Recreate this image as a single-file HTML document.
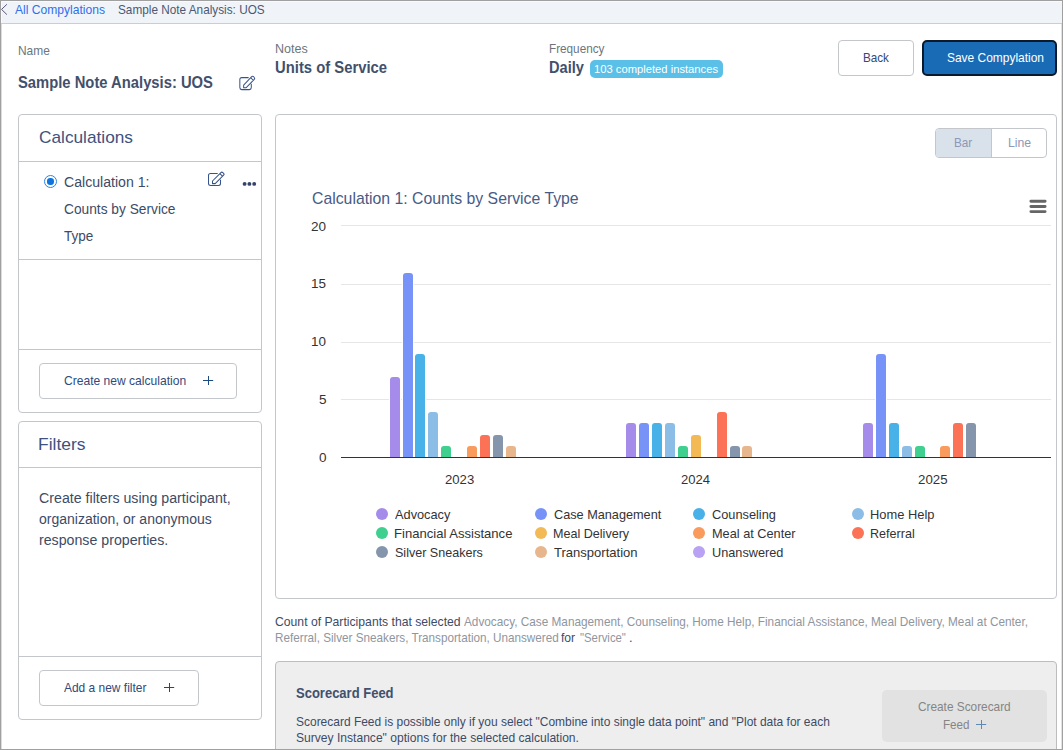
<!DOCTYPE html>
<html>
<head>
<meta charset="utf-8">
<title>Sample Note Analysis: UOS</title>
<style>
*{box-sizing:border-box;margin:0;padding:0}
html,body{width:1063px;height:750px;overflow:hidden;background:#fff}
body{font-family:"Liberation Sans",sans-serif;color:#3d4b66;position:relative}
.abs{position:absolute}
.t{position:absolute;white-space:nowrap;line-height:1;transform-origin:0 0}
#frame{position:absolute;left:0;top:0;width:1063px;height:750px;border:1px solid #a0a0a0;z-index:50;pointer-events:none}
#crumb{position:absolute;left:1px;top:1px;width:1061px;height:23px;background:#f0f4f8;border-bottom:1px solid #c9ced4;box-shadow:inset 1px 1px 0 #f8fafc}
#edgeL{position:absolute;left:1px;top:24px;width:1px;height:725px;background:#dcdcdc}
#edgeR{position:absolute;left:1061px;top:24px;width:1px;height:725px;background:#e2e2e2}
.panel{position:absolute;border:1px solid #c3c7cc;border-radius:4px;background:#fff}
.hr{position:absolute;height:1px;background:#c3c7cc}
.btn{position:absolute;border:1px solid #c3c7cc;border-radius:4px;background:#fff}
.bar{position:absolute;width:10px;border-radius:3px 3px 0 0;box-shadow:0 0 0 1px #fff}
.grid{position:absolute;left:341px;width:710px;height:1px;background:#e6e6e6}
.dot{position:absolute;width:12px;height:12px;border-radius:50%}
</style>
</head>
<body>
<div id="crumb"></div><div id="edgeL"></div><div id="edgeR"></div>
<svg class="abs" style="left:0px;top:3px" width="9" height="13" viewBox="0 0 9 13"><path d="M6.9 1.3 L1.55 6.4 L6.9 11.6" fill="none" stroke="#4a4565" stroke-width="0.9"/></svg>

<div class="abs" id="badge" style="left:590px;top:60px;width:133px;height:18px;border-radius:5px;background:#5bc0e8"></div>
<div class="btn" style="left:838px;top:40px;width:76px;height:36px"></div>
<div class="abs" style="left:922px;top:40px;width:135px;height:36px;border:2px solid #0b1a2a;border-radius:5px;background:#1a6bb5"></div>

<!-- Calculations panel -->
<div class="panel" style="left:18px;top:114px;width:244px;height:299px"></div>
<div class="hr" style="left:19px;top:161px;width:242px"></div>
<div class="hr" style="left:19px;top:259px;width:242px"></div>
<div class="hr" style="left:19px;top:349px;width:242px"></div>
<div class="abs" style="left:44px;top:175px;width:13px;height:13px;border-radius:50%;border:1px solid #2a84e4;background:#fff"></div>
<div class="abs" style="left:46.7px;top:177.7px;width:7.6px;height:7.6px;border-radius:42%;background:#0d74de"></div>
<div class="btn" style="left:39px;top:363px;width:198px;height:36px"></div>

<!-- Filters panel -->
<div class="panel" style="left:18px;top:421px;width:244px;height:299px"></div>
<div class="hr" style="left:19px;top:467px;width:242px"></div>
<div class="hr" style="left:19px;top:656px;width:242px"></div>
<div class="btn" style="left:39px;top:670px;width:160px;height:36px"></div>

<!-- Chart panel -->
<div class="panel" style="left:275px;top:114px;width:782px;height:485px"></div>
<div class="abs" style="left:935px;top:128px;width:112px;height:30px;border:1px solid #c3c7cc;border-radius:4px;background:#fff"></div>
<div class="abs" style="left:936px;top:129px;width:55px;height:28px;border-radius:3px 0 0 3px;background:#d9e2ea"></div>
<div class="abs" style="left:991px;top:129px;width:1px;height:28px;background:#c3c7cc"></div>
<svg class="abs" style="left:1028px;top:198px" width="20" height="18" viewBox="0 0 20 18"><path d="M2.9 3.3 H17.1 M2.9 8.5 H17.1 M2.9 13.6 H17.1" stroke="#666" stroke-width="2.9" stroke-linecap="round" fill="none"/></svg>
<div class="grid" style="top:225px"></div>
<div class="grid" style="top:284px"></div>
<div class="grid" style="top:342px"></div>
<div class="grid" style="top:399px"></div>
<div class="bar" style="left:390px;top:377.0px;height:80.0px;background:#a58cea"></div>
<div class="bar" style="left:403px;top:273.0px;height:184.0px;background:#7793f8"></div>
<div class="bar" style="left:415px;top:354.0px;height:103.0px;background:#47b1e8"></div>
<div class="bar" style="left:428px;top:412.0px;height:45.0px;background:#8cbde6"></div>
<div class="bar" style="left:441px;top:446.0px;height:11.0px;background:#3fcf8e"></div>
<div class="bar" style="left:467px;top:446.0px;height:11.0px;background:#f89b5c"></div>
<div class="bar" style="left:480px;top:435.0px;height:22.0px;background:#fb7256"></div>
<div class="bar" style="left:493px;top:435.0px;height:22.0px;background:#8595ab"></div>
<div class="bar" style="left:506px;top:446.0px;height:11.0px;background:#e8b68d"></div>
<div class="bar" style="left:626px;top:423.0px;height:34.0px;background:#a58cea"></div>
<div class="bar" style="left:639px;top:423.0px;height:34.0px;background:#7793f8"></div>
<div class="bar" style="left:652px;top:423.0px;height:34.0px;background:#47b1e8"></div>
<div class="bar" style="left:665px;top:423.0px;height:34.0px;background:#8cbde6"></div>
<div class="bar" style="left:678px;top:446.0px;height:11.0px;background:#3fcf8e"></div>
<div class="bar" style="left:691px;top:435.0px;height:22.0px;background:#f2b955"></div>
<div class="bar" style="left:717px;top:412.0px;height:45.0px;background:#fb7256"></div>
<div class="bar" style="left:730px;top:446.0px;height:11.0px;background:#8595ab"></div>
<div class="bar" style="left:742px;top:446.0px;height:11.0px;background:#e8b68d"></div>
<div class="bar" style="left:863px;top:423.0px;height:34.0px;background:#a58cea"></div>
<div class="bar" style="left:876px;top:354.0px;height:103.0px;background:#7793f8"></div>
<div class="bar" style="left:889px;top:423.0px;height:34.0px;background:#47b1e8"></div>
<div class="bar" style="left:902px;top:446.0px;height:11.0px;background:#8cbde6"></div>
<div class="bar" style="left:915px;top:446.0px;height:11.0px;background:#3fcf8e"></div>
<div class="bar" style="left:940px;top:446.0px;height:11.0px;background:#f89b5c"></div>
<div class="bar" style="left:953px;top:423.0px;height:34.0px;background:#fb7256"></div>
<div class="bar" style="left:966px;top:423.0px;height:34.0px;background:#8595ab"></div>
<div class="abs" style="left:341px;top:457px;width:710px;height:1px;background:#333"></div>
<div class="dot" style="left:376px;top:508px;background:#a58cea"></div>
<div class="dot" style="left:534.6px;top:508px;background:#7793f8"></div>
<div class="dot" style="left:693px;top:508px;background:#47b1e8"></div>
<div class="dot" style="left:851.7px;top:508px;background:#8cbde6"></div>
<div class="dot" style="left:376px;top:527px;background:#3fcf8e"></div>
<div class="dot" style="left:534.6px;top:527px;background:#f2b955"></div>
<div class="dot" style="left:693px;top:527px;background:#f89b5c"></div>
<div class="dot" style="left:851.7px;top:527px;background:#fb7256"></div>
<div class="dot" style="left:376px;top:546px;background:#8595ab"></div>
<div class="dot" style="left:534.6px;top:546px;background:#e8b68d"></div>
<div class="dot" style="left:693px;top:546px;background:#b9a1f3"></div>

<!-- scorecard -->
<div class="abs" style="left:275px;top:661px;width:782px;height:100px;border:1px solid #bdbdbd;border-radius:4px;background:#eeeeee"></div>
<div class="abs" style="left:882px;top:690px;width:165px;height:52px;border-radius:5px;background:#e2e2e2"></div>

<svg class="abs" style="left:239px;top:75px" width="18" height="16" viewBox="0 0 18 16"><path transform="translate(0.35 0.1) scale(0.955 1)" d="M9.7 2.5 H2.5 Q0.5 2.5 0.5 4.5 V12.5 Q0.5 14.5 2.5 14.5 H10.5 Q12.5 14.5 12.5 12.5 V8.7 M4.5 10 L12.9 1.6 Q13.9 0.7 14.8 1.6 L15.6 2.4 Q16.5 3.3 15.6 4.2 L7.2 12.6 H4.5 Z M11.9 2.6 L14.7 5.4" fill="none" stroke="#36538a" stroke-width="1.05" stroke-linejoin="round"/></svg>
<svg class="abs" style="left:208px;top:171px" width="18" height="16" viewBox="0 0 18 16"><path transform="translate(0 0)" d="M9.7 2.5 H2.5 Q0.5 2.5 0.5 4.5 V12.5 Q0.5 14.5 2.5 14.5 H10.5 Q12.5 14.5 12.5 12.5 V8.7 M4.5 10 L12.9 1.6 Q13.9 0.7 14.8 1.6 L15.6 2.4 Q16.5 3.3 15.6 4.2 L7.2 12.6 H4.5 Z M11.9 2.6 L14.7 5.4" fill="none" stroke="#36538a" stroke-width="1.05" stroke-linejoin="round"/></svg>
<svg class="abs" style="left:242px;top:181px" width="16" height="6" viewBox="0 0 16 6"><circle cx="2.6" cy="2.9" r="1.95" fill="#33436a"/><circle cx="7.4" cy="2.9" r="1.95" fill="#33436a"/><circle cx="12.2" cy="2.9" r="1.95" fill="#33436a"/></svg>
<svg class="abs" style="left:202.7px;top:375px" width="11" height="11" viewBox="0 0 11 11"><path d="M0 5.5 H10.2 M5.5 1 V10" stroke="#1f4a80" stroke-width="1" fill="none"/></svg>
<svg class="abs" style="left:164.4px;top:682px" width="11" height="11" viewBox="0 0 11 11"><path d="M0 5.5 H10.2 M5.5 1 V10" stroke="#1f4a80" stroke-width="1" fill="none"/></svg>
<svg class="abs" style="left:976.4px;top:719.2px" width="11" height="11" viewBox="0 0 11 11"><path d="M0 5.5 H10.2 M5.5 1 V10" stroke="#5a8ab8" stroke-width="1" fill="none"/></svg>
<div class="t" id="bc1" style="left:14.75px;top:4px;font-size:12.25px;color:#2f6fed;transform:scaleX(0.9871)">All Compylations</div>
<div class="t" id="bc2" style="left:117.5px;top:4px;font-size:12.25px;color:#4a5875;transform:scaleX(0.9619)">Sample Note Analysis: UOS</div>
<div class="t" id="h_name" style="left:17.75px;top:45px;font-size:12.25px;color:#6c757d;transform:scaleX(0.9742)">Name</div>
<div class="t" id="h_title" style="left:17.5px;top:74px;font-size:16.5px;font-weight:bold;color:#42506c;transform:scaleX(0.8959)">Sample Note Analysis: UOS</div>
<div class="t" id="h_notes" style="left:274.5px;top:43px;font-size:12.25px;color:#6c757d;transform:scaleX(1.0235)">Notes</div>
<div class="t" id="h_units" style="left:275px;top:59px;font-size:16.5px;font-weight:bold;color:#42506c;transform:scaleX(0.8986)">Units of Service</div>
<div class="t" id="h_freq" style="left:549px;top:43px;font-size:12.25px;color:#6c757d;transform:scaleX(0.9578)">Frequency</div>
<div class="t" id="h_daily" style="left:548.75px;top:59px;font-size:16.5px;font-weight:bold;color:#42506c;transform:scaleX(0.8859)">Daily</div>
<div class="t" id="badge_t" style="left:594px;top:64px;font-size:11px;color:#ffffff;transform:scaleX(1.0193)">103 completed instances</div>
<div class="t" id="b_back" style="left:862.5px;top:51px;font-size:13px;color:#2f4a7d;transform:scaleX(0.8980)">Back</div>
<div class="t" id="b_save" style="left:946.5px;top:51px;font-size:13px;color:#ffffff;transform:scaleX(0.9191)">Save Compylation</div>
<div class="t" id="p_calc" style="left:39px;top:129px;font-size:17px;color:#3e5280;transform:scaleX(1.0147)">Calculations</div>
<div class="t" id="c1" style="left:64px;top:175px;font-size:14px;color:#3d4b66;transform:scaleX(1.0081)">Calculation 1:</div>
<div class="t" id="c2" style="left:64px;top:202px;font-size:14px;color:#3d4b66;transform:scaleX(0.9813)">Counts by Service</div>
<div class="t" id="c3" style="left:64px;top:229px;font-size:14px;color:#3d4b66;transform:scaleX(0.9658)">Type</div>
<div class="t" id="b_calc" style="left:64px;top:375px;font-size:12.25px;color:#2f4a7d;transform:scaleX(0.9852)">Create new calculation</div>
<div class="t" id="p_filt" style="left:38px;top:436px;font-size:17px;color:#3e5280;transform:scaleX(1.0255)">Filters</div>
<div class="t" id="f1" style="left:38.5px;top:491px;font-size:14px;color:#3d4b66;transform:scaleX(1.0141)">Create filters using participant,</div>
<div class="t" id="f2" style="left:38.75px;top:512px;font-size:14px;color:#3d4b66;transform:scaleX(0.9997)">organization, or anonymous</div>
<div class="t" id="f3" style="left:38.5px;top:533px;font-size:14px;color:#3d4b66;transform:scaleX(1.0130)">response properties.</div>
<div class="t" id="b_filt" style="left:63.75px;top:682px;font-size:12.25px;color:#2f4a7d;transform:scaleX(0.9759)">Add a new filter</div>
<div class="t" id="ch_title" style="left:312px;top:190px;font-size:17px;color:#475b86;transform:scaleX(0.9292)">Calculation 1: Counts by Service Type</div>
<div class="t" id="y20" style="left:311px;top:220px;font-size:13px;color:#333333;transform:scaleX(1.0400)">20</div>
<div class="t" id="y15" style="left:311px;top:277px;font-size:13px;color:#333333;transform:scaleX(1.0348)">15</div>
<div class="t" id="y10" style="left:311px;top:335px;font-size:13px;color:#333333;transform:scaleX(1.0339)">10</div>
<div class="t" id="y5" style="left:319px;top:393px;font-size:13px;color:#333333;transform:scaleX(1.0400)">5</div>
<div class="t" id="y0" style="left:319px;top:451px;font-size:13px;color:#333333;transform:scaleX(1.0400)">0</div>
<div class="t" id="x2023" style="left:444.5px;top:473px;font-size:13px;color:#333333;transform:scaleX(1.0114)">2023</div>
<div class="t" id="x2024" style="left:680.75px;top:473px;font-size:13px;color:#333333;transform:scaleX(1.0037)">2024</div>
<div class="t" id="x2025" style="left:918px;top:473px;font-size:13px;color:#333333;transform:scaleX(1.0210)">2025</div>
<div class="t" id="l_adv" style="left:395px;top:508px;font-size:13px;color:#333333;transform:scaleX(0.9829)">Advocacy</div>
<div class="t" id="l_fin" style="left:393.75px;top:527px;font-size:13px;color:#333333;transform:scaleX(1.0055)">Financial Assistance</div>
<div class="t" id="l_sil" style="left:394.5px;top:546px;font-size:13px;color:#333333;transform:scaleX(0.9655)">Silver Sneakers</div>
<div class="t" id="l_cm" style="left:553.5px;top:508px;font-size:13px;color:#333333;transform:scaleX(0.9766)">Case Management</div>
<div class="t" id="l_md" style="left:552.75px;top:527px;font-size:13px;color:#333333;transform:scaleX(0.9667)">Meal Delivery</div>
<div class="t" id="l_tr" style="left:554px;top:546px;font-size:13px;color:#333333;transform:scaleX(1.0035)">Transportation</div>
<div class="t" id="l_co" style="left:712px;top:508px;font-size:13px;color:#333333;transform:scaleX(0.9823)">Counseling</div>
<div class="t" id="l_mc" style="left:711.5px;top:527px;font-size:13px;color:#333333;transform:scaleX(0.9793)">Meal at Center</div>
<div class="t" id="l_un" style="left:712px;top:546px;font-size:13px;color:#333333;transform:scaleX(0.9776)">Unanswered</div>
<div class="t" id="l_hh" style="left:869.75px;top:508px;font-size:13px;color:#333333;transform:scaleX(0.9909)">Home Help</div>
<div class="t" id="l_re" style="left:869.75px;top:527px;font-size:13px;color:#333333;transform:scaleX(0.9671)">Referral</div>
<div class="t" id="d1a" style="left:275px;top:616px;font-size:12.25px;color:#3d4b66;transform:scaleX(0.9949)">Count of Participants that selected</div>
<div class="t" id="d1b" style="left:464px;top:616px;font-size:12.25px;color:#8f969e;transform:scaleX(0.9616)">Advocacy, Case Management, Counseling, Home Help, Financial Assistance, Meal Delivery, Meal at Center,</div>
<div class="t" id="d2a" style="left:275px;top:632px;font-size:12.25px;color:#8f969e;transform:scaleX(0.9559)">Referral, Silver Sneakers, Transportation, Unanswered</div>
<div class="t" id="d2b" style="left:560.75px;top:632px;font-size:12.25px;color:#3d4b66;transform:scaleX(0.9894)">for</div>
<div class="t" id="d2c" style="left:580px;top:632px;font-size:12.25px;color:#8f969e;transform:scaleX(0.9262)">&quot;Service&quot;</div>
<div class="t" id="d2d" style="left:629px;top:632px;font-size:12.25px;color:#3d4b66;transform:scaleX(1.0400)">.</div>
<div class="t" id="sc_title" style="left:296px;top:686px;font-size:14px;font-weight:bold;color:#42506c;transform:scaleX(0.9287)">Scorecard Feed</div>
<div class="t" id="sc1" style="left:296px;top:716px;font-size:12.25px;color:#3d4b66;transform:scaleX(0.9773)">Scorecard Feed is possible only if you select &quot;Combine into single data point&quot; and &quot;Plot data for each</div>
<div class="t" id="sc2" style="left:296px;top:732px;font-size:12.25px;color:#3d4b66;transform:scaleX(0.9860)">Survey Instance&quot; options for the selected calculation.</div>
<div class="t" id="sb1" style="left:917.75px;top:700px;font-size:13px;color:#858585;transform:scaleX(0.9094)">Create Scorecard</div>
<div class="t" id="sb2" style="left:943px;top:718px;font-size:13px;color:#858585;transform:scaleX(0.8914)">Feed</div>
<div class="t" id="tg_bar" style="left:953.5px;top:137px;font-size:12.25px;color:#8b98b8;transform:scaleX(0.9589)">Bar</div>
<div class="t" id="tg_line" style="left:1008px;top:137px;font-size:12.25px;color:#8b98b8">Line</div>
<div id="frame"></div>
</body>
</html>
